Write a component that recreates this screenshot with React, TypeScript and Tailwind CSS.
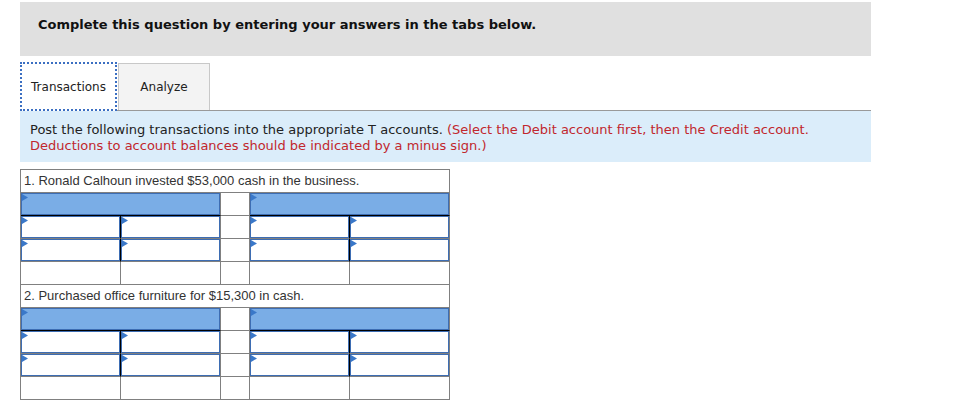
import React from "react";

const Tri = () => (
  <svg className="absolute left-0 top-0" width="6" height="7" viewBox="0 0 6 7">
    <polygon points="0,0 6,3.5 0,7" fill="#3a78c9" />
  </svg>
);

const InputBox = ({ fill }: { fill?: boolean }) => (
  <div
    className={`relative h-full w-full border border-[#3d6db3] ${fill ? "bg-[#7aade6]" : "bg-white"}`}
  >
    <Tri />
  </div>
);

const Block = ({ title }: { title: string }) => (
  <div className="grid grid-cols-[100px_100px_29px_100px_100px]">
    <div
      className="col-span-5 h-[23px] border-b border-r border-[#808080] pl-[3px] pt-[2px] text-[13px] leading-[17px] text-[#333]"
      style={{ fontFamily: '"Liberation Sans", Arial, sans-serif' }}
    >
      {title}
    </div>
    <div className="col-span-2 h-[23px] border-b border-r border-b-black border-r-[#808080]">
      <InputBox fill />
    </div>
    <div className="h-[23px] border-b border-r border-[#808080]" />
    <div className="col-span-2 h-[23px] border-b border-r border-b-black border-r-[#808080]">
      <InputBox fill />
    </div>
    {[0, 1].map((i) => (
      <React.Fragment key={i}>
        <div className="h-[23px] border-b border-r border-b-[#808080] border-r-black">
          <InputBox />
        </div>
        <div className="h-[23px] border-b border-r border-[#808080]">
          <InputBox />
        </div>
        <div className="h-[23px] border-b border-r border-[#808080]" />
        <div className="h-[23px] border-b border-r border-b-[#808080] border-r-black">
          <InputBox />
        </div>
        <div className="h-[23px] border-b border-r border-[#808080]">
          <InputBox />
        </div>
      </React.Fragment>
    ))}
    <div className="h-[23px] border-b border-r border-[#808080]" />
    <div className="h-[23px] border-b border-r border-[#808080]" />
    <div className="h-[23px] border-b border-r border-[#808080]" />
    <div className="h-[23px] border-b border-r border-[#808080]" />
    <div className="h-[23px] border-b border-r border-[#808080]" />
  </div>
);

export default function App() {
  return (
    <div
      className="h-[402px] w-[970px] overflow-hidden bg-white"
      style={{ fontFamily: '"DejaVu Sans", Verdana, sans-serif' }}
    >
      <div className="ml-[20px] mt-[2px] h-[54px] w-[851px] bg-[#e0e0e0] pl-[18px] pt-[15px]">
        <div className="text-[13px] font-bold leading-[16px] text-[#111]">
          Complete this question by entering your answers in the tabs below.
        </div>
      </div>

      <div className="ml-[20px] mt-[6px] flex w-[851px] items-end border-b border-[#999]">
        <div className="-mb-px flex h-[49px] w-[97px] items-center justify-center border-2 border-dotted border-[#3b6fc2] bg-white text-[12px] text-[#222]">
          Transactions
        </div>
        <div className="ml-[1px] flex h-[47px] w-[92px] items-center justify-center border border-b-0 border-[#c8c8c8] bg-[#f3f3f3] text-[12px] text-[#222]">
          Analyze
        </div>
      </div>

      <div className="ml-[20px] h-[51px] w-[851px] bg-[#dbedfa] pl-[10px] pr-[40px] pt-[11px] text-[13px] leading-[16px] text-[#222]">
        Post the following transactions into the appropriate T accounts.{" "}
        <span className="text-[#c1272d]">
          (Select the Debit account first, then the Credit account. Deductions to account balances should be indicated by a minus sign.)
        </span>
      </div>

      <div className="ml-[20px] mt-[7px] w-[430px] border-l border-t border-[#808080]">
        <Block title="1. Ronald Calhoun invested $53,000 cash in the business." />
        <Block title="2. Purchased office furniture for $15,300 in cash." />
      </div>
    </div>
  );
}
